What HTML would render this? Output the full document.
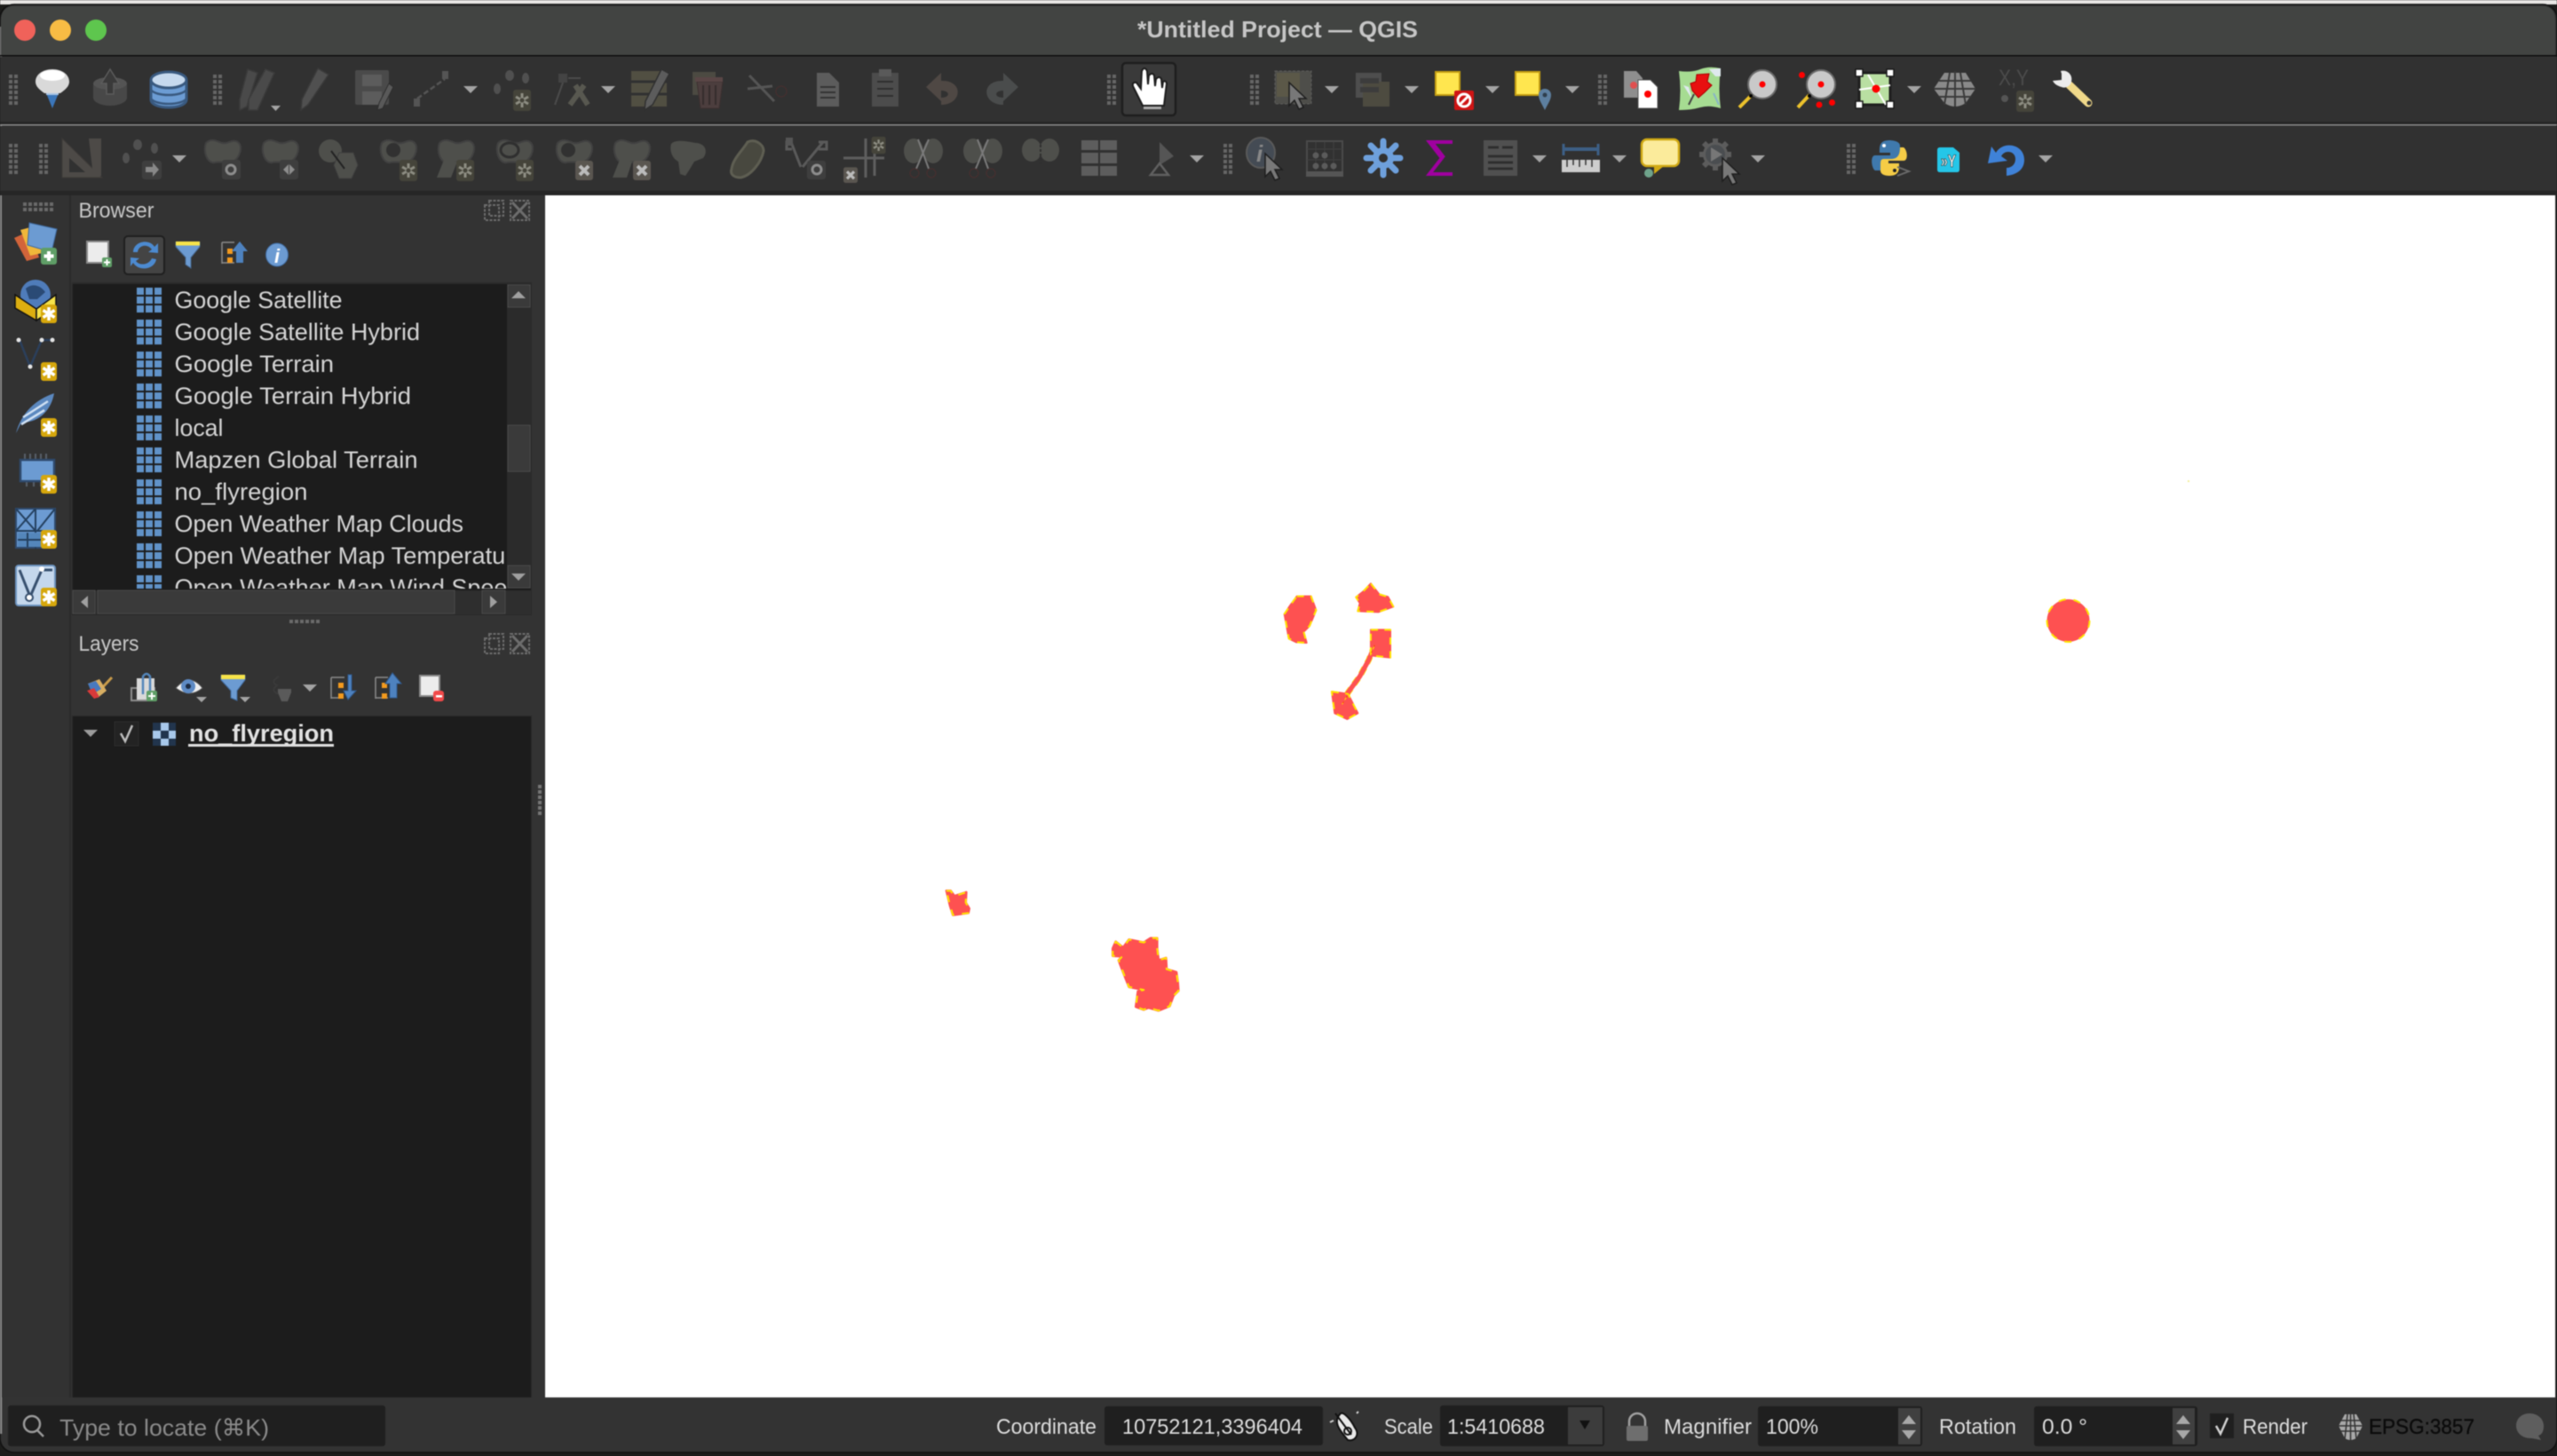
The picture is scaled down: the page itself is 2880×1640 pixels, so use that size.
<!DOCTYPE html>
<html><head><meta charset="utf-8"><title>QGIS</title>
<style>html,body{margin:0;padding:0;background:#1d1d1b;overflow:hidden}svg{display:block;filter:blur(.55px)}text{font-family:"Liberation Sans",sans-serif}</style>
</head><body>
<svg xmlns="http://www.w3.org/2000/svg" width="2880" height="1640" viewBox="0 0 2880 1640">
<defs>
<g id="h" fill="#666"><rect x="0" y="0" width="4" height="4"/><rect x="6" y="0" width="4" height="4"/><rect x="0" y="6" width="4" height="4"/><rect x="6" y="6" width="4" height="4"/><rect x="0" y="12" width="4" height="4"/><rect x="6" y="12" width="4" height="4"/><rect x="0" y="18" width="4" height="4"/><rect x="6" y="18" width="4" height="4"/><rect x="0" y="24" width="4" height="4"/><rect x="6" y="24" width="4" height="4"/><rect x="0" y="30" width="4" height="4"/><rect x="6" y="30" width="4" height="4"/></g>
<polygon id="a" points="0,0 16,0 8,8" fill="#a4a4a4"/>
<g id="g" fill="#6092c8"><rect x="0" y="0" width="8" height="8"/><rect x="10" y="0" width="8" height="8"/><rect x="20" y="0" width="8" height="8"/><rect x="0" y="10" width="8" height="8"/><rect x="10" y="10" width="8" height="8"/><rect x="20" y="10" width="8" height="8"/><rect x="0" y="20" width="8" height="8"/><rect x="10" y="20" width="8" height="8"/><rect x="20" y="20" width="8" height="8"/></g>
<path id="b" d="M4 4C10-2 16 2 22 4S34-1 40 3C46 8 42 20 36 24S20 24 14 26C6 28 0 14 4 4Z" fill="#4e4f4b" stroke="#414141" stroke-width="2"/>
<g id="sd"><rect width="20" height="24" rx="3" fill="#45443a"/><path d="M10 4V20M3 8L17 16M17 8L3 16" stroke="#8d8d82" stroke-width="3"/><circle cx="10" cy="12" r="2.500" fill="#45443a"/></g>
<g id="xd"><rect width="20" height="22" rx="3" fill="#5a5650"/><path d="M5 6L15 16M15 6L5 16" stroke="#bbb" stroke-width="4"/></g>
<g id="sy"><rect width="18" height="21" rx="3" fill="#d6a70c"/><path d="M9 3V18M2.500 6.500L15.500 14.500M15.500 6.500L2.500 14.500" stroke="#fff" stroke-width="3.500"/></g>
<path id="cur" d="M0 0V26L6 20L11 30L16 28L11 18L19 18Z" fill="#787878" stroke="#1e1e1e" stroke-width="1.500"/>
<g id="ft" fill="none" stroke="#6d6d6d" stroke-width="2" stroke-dasharray="3 1.500"><rect x="0" y="5" width="16" height="17"/><rect x="5" y="0" width="16" height="17"/></g>
<g id="cl" fill="none" stroke="#6d6d6d" stroke-width="2" stroke-dasharray="3 1.500"><rect x="0" y="0" width="21" height="22"/><path d="M2 2L19 20M19 2L2 20" stroke-width="3" stroke-dasharray="none"/></g>
<clipPath id="tc"><rect x="82" y="320" width="488" height="343"/></clipPath>
<g id="m1">
<path d="M182 125L230 125L247 172L225 225L205 245L215 282L180 280L155 268L140 185L160 155Z"/>
<path d="M432 82L460 118L490 127L508 160L458 178L388 175L395 148L382 128L405 110Z"/>
<path d="M432 238H498V332L432 325Z"/>
<path d="M300 447L355 455L388 520L352 540L310 520Z"/>
</g>
<g id="m2">
<path d="M78 70L92 70L105 88L145 75L143 110L155 130L152 145L100 152L90 120Z"/>
<path d="M650 242L675 262L695 235L745 245L768 230L790 230L790 265L795 305L820 297L822 335L855 345L860 380L862 408L845 425L832 460L795 475L760 465L745 472L718 462L725 410L745 405L695 395L675 345L660 305L672 292L640 290L640 265Z"/>
</g>
</defs>

<!-- frame -->
<rect width="2880" height="1640" fill="#1d1d1b"/>
<rect width="2880" height="5" fill="#e9e7e5"/>
<rect x="0" y="5" width="2880" height="1631" rx="16" fill="#333" stroke="#111" stroke-width="1.500"/>
<path d="M1 30V1615" stroke="#8a8a8a" stroke-width="2.500"/>
<path d="M16 7H2864Q2878 7 2878 24V62H1V24Q1 7 16 7Z" fill="#424442"/>
<rect y="62" width="2880" height="1.500" fill="#0d0d0d"/>
<circle cx="28" cy="34" r="12" fill="#f0625a"/><circle cx="68" cy="34" r="12" fill="#f8bc44"/><circle cx="108" cy="34" r="12" fill="#5ec64e"/>
<text x="1281" y="42" font-size="26" font-weight="700" fill="#c6c6c6" textLength="316" lengthAdjust="spacingAndGlyphs">*Untitled Project — QGIS</text>

<!-- toolbars -->
<rect y="64" width="2880" height="74" fill="#313131"/>
<rect y="137" width="2880" height="3" fill="#272727"/>
<rect y="140" width="2880" height="1.500" fill="#8c8c8c"/>
<rect y="142" width="2880" height="73" fill="#313131"/>
<rect y="215" width="2880" height="5" fill="#262626"/>

<!-- toolbar 1 -->
<use href="#h" x="10" y="84"/>
<polygon points="50,100 68,100 59,122" fill="#3b76ba"/><rect x="52" y="98" width="14" height="9" fill="#a9c4e4"/>
<path d="M59 78C70 78 78 84 78 92C78 98 72 102 68 105H50C46 102 40 98 40 92C40 84 48 78 59 78Z" fill="#d9d9d9"/><ellipse cx="59" cy="85" rx="14" ry="6" fill="#fff"/>
<ellipse cx="124" cy="110" rx="19" ry="9" fill="#484848"/><rect x="105" y="94" width="38" height="16" fill="#484848"/><ellipse cx="124" cy="94" rx="19" ry="7" fill="#545454"/>
<path d="M124 78L134 94H128V106H120V94H114Z" fill="#3a3a3a" stroke="#5c5c5c" stroke-width="1.500"/>
<path d="M170 90V112C170 124 210 124 210 112V90" fill="#6c9cd3" stroke="#39597f" stroke-width="3"/><ellipse cx="190" cy="90" rx="20" ry="9" fill="#c6d9ee" stroke="#39597f" stroke-width="3"/>
<path d="M170 101C175 109 205 109 210 101M170 111C175 119 205 119 210 111" fill="none" stroke="#39597f" stroke-width="2.500"/>
<use href="#h" x="240" y="84"/>
<g fill="#4a4a4a" stroke="#3b3b3b" stroke-width="1.500"><path d="M279 78L290 82L278 120L270 124V112Z"/><path d="M299 78L309 82L290 124L280 124V112Z"/></g>
<polygon points="305,119 316,119 310.500,125" fill="#a4a4a4"/>
<path d="M358 77L370 84L347 118L339 124L340 112Z" fill="#505050" stroke="#3a3a3a" stroke-width="1.500"/>
<rect x="400" y="79" width="38" height="39" rx="2" fill="#4a4a4a"/><rect x="408" y="84" width="22" height="13" fill="#5c5c5c"/><rect x="408" y="103" width="22" height="15" fill="#5c5c5c"/><path d="M438 94L443 98L431 122L425 124L427 116Z" fill="#595959" stroke="#2e2e2e"/>
<rect x="466" y="111" width="7" height="9" fill="#555"/><rect x="498" y="80" width="7" height="9" fill="#555"/><path d="M470 111L501 89" stroke="#555" stroke-width="2.500" stroke-dasharray="6 3"/>
<use href="#a" x="522" y="97"/>
<g fill="#505050"><ellipse cx="574" cy="85" rx="5" ry="6"/><ellipse cx="592" cy="88" rx="4" ry="6"/><ellipse cx="560" cy="100" rx="4" ry="6"/></g><use href="#sd" x="578" y="101"/>
<rect x="629" y="83" width="10" height="10" fill="#444"/><path d="M625 118L634 93M640 88H654" stroke="#4b4b4b" stroke-width="2"/><path d="M642 118L658 96M662 118L648 96" stroke="#585850" stroke-width="6"/>
<use href="#a" x="677" y="97"/>
<rect x="711" y="80" width="40" height="40" fill="#514f42"/><path d="M711 92H751M711 106H751" stroke="#313131" stroke-width="3"/><path d="M745 78L754 83L735 118L726 124L727 114Z" fill="#5c5c5c" stroke="#303030" stroke-width="1.500"/>
<rect x="780" y="81" width="26" height="26" fill="#4c4a42"/><path d="M785 92H814L810 122H789Z" fill="#4c3e3e" stroke="#3d3030"/><rect x="783" y="87" width="31" height="5" fill="#5a4646"/><path d="M792 96V118M799 96V118M806 96V118" stroke="#352c2c" stroke-width="2"/>
<path d="M844 85L872 114M842 100L870 97" stroke="#555" stroke-width="3" fill="none"/><circle cx="880" cy="103" r="6" fill="none" stroke="#4a2f2f"/>
<path d="M920 82H934L945 93V120H920V82Z" fill="#5c5c5c"/><path d="M924 98H941M924 104H941M924 110H941" stroke="#333" stroke-width="2"/>
<rect x="982" y="82" width="30" height="38" fill="#4c4c4c"/><rect x="990" y="78" width="14" height="8" fill="#5a5a5a"/><path d="M988 92H1006M988 100H1006M988 108H1006" stroke="#2f2f2f" stroke-width="2"/>
<path d="M1060 82L1043 98L1060 114V102C1070 102 1071 110 1060 110V118C1084 118 1086 90 1060 91Z" fill="#4f4844"/>
<path d="M1130 82L1147 98L1130 114V102C1120 102 1119 110 1130 110V118C1106 118 1104 90 1130 91Z" fill="#4a4c4c"/>
<use href="#h" x="1247" y="84"/>
<rect x="1264" y="71" width="60" height="59" rx="4" fill="#3a3a3a" stroke="#1e1e1e" stroke-width="2.500"/>
<path d="M1287 119L1276 97Q1275 92 1280 93L1285 100L1286 80Q1289 74 1292 80L1293 95L1294 85Q1298 81 1300 85L1301 97L1302 89Q1306 85 1308 89L1309 99L1310 92Q1313 90 1314 94L1311 119Z" fill="#fff" stroke="#1d1d1d" stroke-width="2"/>
<rect x="1288" y="120" width="20" height="3" fill="#aaa"/>
<use href="#h" x="1408" y="84"/>
<rect x="1436" y="80" width="41" height="37" fill="#4e4e4a" stroke="#5c5c5c" stroke-dasharray="3 2"/><rect x="1438" y="82" width="26" height="27" fill="#5b5848"/>
<use href="#cur" x="1452" y="93"/>
<use href="#a" x="1492" y="97"/>
<rect x="1527" y="82" width="29" height="28" fill="#4e4e4e"/><rect x="1535" y="92" width="30" height="28" fill="#4d4b40"/><rect x="1532" y="88" width="21" height="6" fill="#3c3c3c"/><rect x="1532" y="98" width="21" height="6" fill="#3c3c3c"/>
<use href="#a" x="1582" y="97"/>
<rect x="1617" y="81" width="27" height="26" fill="#ffe64f" stroke="#c59e12" stroke-width="2"/><rect x="1638" y="102" width="22" height="22" rx="2" fill="#cf1414"/><circle cx="1649" cy="113" r="7" fill="none" stroke="#fff" stroke-width="3"/><path d="M1644 118L1654 108" stroke="#fff" stroke-width="3"/>
<use href="#a" x="1673" y="97"/>
<rect x="1707" y="81" width="27" height="26" fill="#ffe64f" stroke="#c59e12" stroke-width="2"/><path d="M1740 124C1736 116 1733 112 1733 107A7 7 0 1 1 1747 107C1747 112 1744 116 1740 124Z" fill="#5d7f9f"/><circle cx="1740" cy="107" r="2.500" fill="#2e3e4c"/>
<use href="#a" x="1763" y="97"/>
<use href="#h" x="1800" y="84"/>
<path d="M1829 80H1843L1850 88V110H1829Z" fill="#8e8e8e"/><circle cx="1840" cy="96" r="4" fill="#e05050"/>
<path d="M1845 90H1859L1867 98V122H1845Z" fill="#fff" stroke="#555"/><circle cx="1856" cy="106" r="4" fill="#f00"/>
<path d="M1891 80Q1905 82 1915 78T1938 77Q1935 100 1938 122Q1925 118 1915 121T1891 124Q1894 102 1891 80Z" fill="#a6dc92"/><path d="M1925 78L1932 86L1938 86V77ZM1896 96L1906 112L1902 98Z" fill="#dfe9ee"/><path d="M1930 105L1936 118" stroke="#88b4c8" stroke-width="2"/>
<path d="M1911 84L1925 83L1923 92L1928 96L1920 104L1913 110L1906 102L1904 94L1910 92Z" fill="#e81010" stroke="#a00" /><path d="M1908 106L1902 118" stroke="#444" stroke-width="2"/>
<circle cx="1985" cy="95" r="16" fill="#c9c9c9" stroke="#6b6b6b" stroke-width="2"/><circle cx="1985" cy="95" r="3.500" fill="#f00"/><path d="M1973 107L1959 121" stroke="#ecc22c" stroke-width="4"/><circle cx="1972" cy="108" r="2" fill="#000"/>
<circle cx="2051" cy="95" r="16" fill="#c9c9c9" stroke="#6b6b6b" stroke-width="2"/><circle cx="2051" cy="95" r="3.500" fill="#f00"/><path d="M2038 107L2025 121" stroke="#ecc22c" stroke-width="4"/><circle cx="2038" cy="108" r="2" fill="#000"/>
<circle cx="2029.500" cy="84.500" r="3.500" fill="#f00"/><circle cx="2049" cy="118" r="3.500" fill="#f00"/><circle cx="2063.500" cy="115.500" r="3.500" fill="#f00"/>
<rect x="2094" y="82" width="35" height="36" fill="#b9dfa2" stroke="#1f1f1f" stroke-width="3"/><path d="M2104 84L2124 118M2094 101L2129 96" stroke="#fff" stroke-width="2"/>
<circle cx="2113" cy="100" r="4.500" fill="#f00"/>
<g fill="#fff" stroke="#1a1a1a" stroke-width="1.500"><rect x="2090" y="78" width="8" height="8"/><rect x="2125" y="78" width="8" height="8"/><rect x="2090" y="114" width="8" height="8"/><rect x="2125" y="114" width="8" height="8"/></g>
<use href="#a" x="2148" y="97"/>
<path d="M2178 100L2190 82H2214L2225 100L2214 116Q2202 124 2190 116Z" fill="#8a8a8a"/><path d="M2178 100H2225M2184 91H2220M2184 109H2220M2196 82L2190 118M2208 82L2214 118M2202 80V120" stroke="#3a3a3a" stroke-width="2"/>
<text x="2251" y="96" font-size="25" fill="#4b4b4b" textLength="34" lengthAdjust="spacingAndGlyphs">X,Y</text><circle cx="2258" cy="111" r="4" fill="#555"/><use href="#sd" x="2271" y="102"/>
<path d="M2331 96L2352 116" stroke="#f0d98a" stroke-width="9" stroke-linecap="round"/><path d="M2321 80C2328 78 2335 84 2333 92C2332 97 2326 100 2322 98C2318 97 2314 95 2312 91L2322 90L2322 83Z" fill="#ececec"/><circle cx="2353" cy="116" r="2.500" fill="#333"/>

<!-- toolbar 2 -->
<use href="#h" x="10" y="162"/><use href="#h" x="44" y="162"/>
<path d="M70 156L115 200H70Z" fill="#4d4a47" stroke="#3d3a38"/><path d="M78 178L96 194H78Z" fill="#313131"/><path d="M100 156H114V198H105Z" fill="#4d4a47"/>
<g fill="#505050"><ellipse cx="155" cy="163" rx="5" ry="6"/><ellipse cx="174" cy="167" rx="4" ry="6"/><ellipse cx="142" cy="178" rx="4" ry="6"/></g><rect x="160" y="181" width="22" height="21" rx="3" fill="#3e3e3e"/><path d="M164 188H172V183L179 191L172 199V194H164Z" fill="#888"/>
<use href="#a" x="194" y="175"/>
<use href="#b" x="228" y="157"/><rect x="250" y="180" width="21" height="22" rx="3" fill="#3e3e3e"/><circle cx="260" cy="191" r="5" fill="none" stroke="#8d8d8d" stroke-width="3"/>
<use href="#b" x="293" y="157"/><rect x="315" y="180" width="21" height="22" rx="3" fill="#3e3e3e"/><path d="M319 191L325 185V197ZM332 191L326 185V197Z" fill="#8d8d8d"/>
<ellipse cx="372" cy="170" rx="13" ry="13" fill="#4e4f4b"/><path d="M382 172H398L403 186L396 201H382L376 186Z" fill="#4e4f4b" stroke="#3e3e3e"/><path d="M373 170L388 190" stroke="#222" stroke-width="2"/>
<use href="#b" x="426" y="157"/><ellipse cx="443" cy="169" rx="8" ry="8" fill="#313131"/><use href="#sd" x="450" y="180"/>
<use href="#b" x="491" y="157"/><path d="M492 200L500 180L515 182L508 200Z" fill="#4e4f4b"/><use href="#sd" x="514" y="180"/>
<use href="#b" x="557" y="157"/><ellipse cx="574" cy="169" rx="10" ry="8" fill="none" stroke="#2f2f2f" stroke-width="3"/><use href="#sd" x="581" y="180"/>
<use href="#b" x="624" y="157"/><ellipse cx="640" cy="169" rx="8" ry="8" fill="#313131"/><use href="#xd" x="648" y="181"/>
<use href="#b" x="689" y="157"/><path d="M690 200L698 180L712 182L706 200Z" fill="#4e4f4b"/><use href="#xd" x="713" y="181"/>
<path d="M756 162C762 156 776 160 784 161C796 162 797 172 792 178L782 182L776 192L772 198L766 196L764 182C756 178 754 168 756 162Z" fill="#4e4f4b"/>
<path d="M824 190C826 178 836 170 842 160C850 156 860 162 860 170C858 182 846 198 834 200C826 200 822 196 824 190Z" fill="#48483f" stroke="#5e5e52" stroke-width="3"/>
<path d="M891 160L902 188M891 160H886V168H892M927 160L904 188M922 160H931V168H922" stroke="#5a5a5a" stroke-width="3" fill="none"/><rect x="885" y="155" width="8" height="9" fill="#555"/><rect x="909" y="181" width="21" height="21" rx="3" fill="#3e3e3e"/><circle cx="920" cy="191" r="5" fill="none" stroke="#8d8d8d" stroke-width="3"/>
<path d="M950 178H996M975 156V200M985 168V198" stroke="#5e5e5e" stroke-width="3"/><use href="#sd" x="982" y="155" transform="translate(196 30) scale(.8)"/><use href="#xd" x="950" y="188" transform="translate(190 38) scale(.8)"/>
<g id="cut1"><ellipse cx="1029" cy="170" rx="11" ry="14" fill="#4e4f4b"/><ellipse cx="1051" cy="170" rx="11" ry="14" fill="#4e4f4b"/><path d="M1046 157L1032 190M1034 157L1046 190" stroke="#7a7a7a" stroke-width="2"/><circle cx="1030" cy="195" r="5" fill="none" stroke="#4a2f2f"/><circle cx="1049" cy="195" r="5" fill="none" stroke="#4a2f2f"/></g>
<use href="#cut1" x="67"/>
<ellipse cx="1162" cy="169" rx="11" ry="13" fill="#4e4f4b"/><ellipse cx="1182" cy="169" rx="11" ry="13" fill="#4e4f4b"/><path d="M1172 158V185" stroke="#2f2f2f" stroke-width="2" stroke-dasharray="3 2"/>
<g fill="#5d5d5d"><rect x="1218" y="158" width="40" height="11"/><rect x="1218" y="172" width="40" height="12"/><rect x="1218" y="187" width="40" height="11"/></g><path d="M1238 158V198" stroke="#313131" stroke-width="2"/>
<path d="M1306 160L1322 176L1306 186Z" fill="#555"/><path d="M1306 184L1296 197H1316Z" fill="none" stroke="#606060" stroke-width="2.500"/>
<use href="#a" x="1340" y="175"/>
<use href="#h" x="1378" y="162"/>
<ellipse cx="1420" cy="172" rx="16" ry="17" fill="#444b54" stroke="#5a5a5a" stroke-width="2"/><text x="1415" y="182" font-size="26" font-weight="700" font-style="italic" fill="#888">i</text>
<use href="#cur" x="1425" y="173"/>
<rect x="1472" y="159" width="40" height="39" fill="none" stroke="#4a4a4a" stroke-width="2"/><rect x="1471" y="193" width="42" height="6" fill="#555"/><path d="M1482 160V192M1492 160V192M1502 160V192M1472 168H1512M1472 180H1512" stroke="#3f3f3f"/><g fill="#5b5b5b"><circle cx="1482" cy="175" r="3.500"/><circle cx="1492" cy="175" r="3.500"/><circle cx="1482" cy="187" r="3.500"/><circle cx="1492" cy="187" r="3.500"/><circle cx="1502" cy="187" r="3.500"/></g>
<g stroke="#6ea0dc" stroke-width="7" stroke-linecap="round"><path d="M1558 159V197M1539 178H1577M1544 164L1572 192M1572 164L1544 192"/></g><circle cx="1558" cy="178" r="12" fill="#6ea0dc"/><circle cx="1558" cy="178" r="5" fill="#313131"/>
<path d="M1636 160H1610L1624 178L1610 196H1636" fill="none" stroke="#a000a0" stroke-width="4"/><path d="M1612 160L1626 178" stroke="#a000a0" stroke-width="5"/>
<rect x="1671" y="158" width="38" height="40" fill="#505050"/><path d="M1676 166H1688M1692 166H1704M1676 176H1704M1676 183H1704M1676 190H1704" stroke="#2f2f2f" stroke-width="3"/>
<use href="#a" x="1726" y="175"/>
<rect x="1760" y="166" width="41" height="4" fill="#3d5f85"/><path d="M1761 162V175M1800 162V175" stroke="#3d5f85" stroke-width="3"/><rect x="1759" y="180" width="43" height="14" fill="#cdcdcd"/><path d="M1765 180V188M1772 180V186M1779 180V188M1786 180V186M1793 180V188" stroke="#333" stroke-width="1.500"/>
<use href="#a" x="1816" y="175"/>
<rect x="1849" y="157" width="42" height="30" rx="6" fill="#fbeb9b" stroke="#d0a914" stroke-width="2.500"/><path d="M1863 187V196L1874 187Z" fill="#d0a914"/><circle cx="1857" cy="195" r="5" fill="#6fa38b"/>
<g stroke="#5c5c5c" stroke-width="6"><path d="M1932 156V192M1914 174H1950M1919 161L1945 187M1945 161L1919 187"/></g><circle cx="1932" cy="174" r="12.500" fill="#4a4d50" stroke="#5c5c5c" stroke-width="3"/><path d="M1927 166L1940 174L1927 182Z" fill="#777"/>
<use href="#cur" x="1940" y="178"/>
<use href="#a" x="1972" y="175"/>
<use href="#h" x="2080" y="162"/>
<path d="M2128 158C2116 158 2117 166 2117 172H2129V175H2112C2106 175 2108 190 2112 192H2118C2118 182 2122 179 2128 179H2136C2140 179 2140 176 2140 172V164C2140 160 2134 158 2128 158Z" fill="#3f79ad"/><circle cx="2122" cy="164" r="2" fill="#fff"/>
<path d="M2128 198C2140 198 2139 190 2139 184H2127V181H2144C2150 181 2148 168 2144 166H2140C2140 176 2136 179 2130 179H2122C2118 179 2118 182 2118 186V192C2118 196 2122 198 2128 198Z" fill="#f5cc46"/><circle cx="2134" cy="192" r="2" fill="#222"/>
<path d="M2137 188L2150 193L2137 198" fill="none" stroke="#6a6a6a" stroke-width="2"/>
<path d="M2182 169Q2182 166 2185 166H2200L2207 172V191Q2207 194 2204 194H2185Q2182 194 2182 191Z" fill="#25c6e8"/><text x="2186" y="188" font-size="19" font-weight="700" fill="#fff" stroke="#111" stroke-width=".6" textLength="17" lengthAdjust="spacingAndGlyphs">»Y</text>
<path d="M2248 172C2256 158 2280 162 2280 180C2280 192 2270 197 2260 198V189C2266 189 2270 185 2270 179C2270 170 2258 168 2254 176L2261 181L2239 184L2243 165Z" fill="#3f82d8"/>
<use href="#a" x="2296" y="175"/>

<!-- left bar -->
<rect x="2" y="220" width="76" height="1354" fill="#323232"/>
<rect x="78" y="220" width="2" height="1354" fill="#2a2a2a"/>
<g fill="#6a6a6a"><rect x="26" y="228" width="4" height="4"/><rect x="32" y="228" width="4" height="4"/><rect x="38" y="228" width="4" height="4"/><rect x="44" y="228" width="4" height="4"/><rect x="50" y="228" width="4" height="4"/><rect x="56" y="228" width="4" height="4"/><rect x="26" y="234" width="4" height="4"/><rect x="32" y="234" width="4" height="4"/><rect x="38" y="234" width="4" height="4"/><rect x="44" y="234" width="4" height="4"/><rect x="50" y="234" width="4" height="4"/><rect x="56" y="234" width="4" height="4"/></g>
<path d="M16 268L34 260L44 290L30 294Z" fill="#d2643a"/><path d="M23 259L42 254L52 284L34 288Z" fill="#f0b73a"/><path d="M33 251L64 258L58 284L31 276Z" fill="#6c9bd2" stroke="#3f6a9f"/><rect x="46" y="279" width="18" height="19" rx="3" fill="#5f9e67"/><path d="M55 283V294M49.500 288.500H60.500" stroke="#fff" stroke-width="4"/>
<circle cx="40" cy="332" r="17" fill="#4f7cba"/><path d="M29 325C37 318 46 322 51 329L42 337L33 337Z" fill="#2a4a75"/>
<path d="M17 332L41 348V361L17 347Z" fill="#dcae10" stroke="#111" stroke-width="1.500"/><path d="M41 348L63 332V346L41 361Z" fill="#f6e34a" stroke="#111" stroke-width="1.500"/><use href="#sy" x="46" y="343"/>
<path d="M22 383L34 413L47 383M47 383H60" stroke="#2b3f5c" stroke-width="2.500" fill="none"/><g fill="#e4e4e4"><circle cx="21" cy="383" r="2.500"/><circle cx="34" cy="413" r="2.500"/><circle cx="47" cy="383" r="2.500"/><circle cx="59" cy="383" r="2.500"/></g><use href="#sy" x="46" y="408"/>
<path d="M18 488C24 465 40 450 61 443C58 460 46 476 24 476Z" fill="#5b88bf"/><path d="M26 470L54 452M24 478L50 462" stroke="#cfe0f3" stroke-width="2.500"/><use href="#sy" x="46" y="471"/>
<path d="M28 511V520M34 511V520M40 511V520M46 511V520M52 511V520M30 548V540M38 548V540M46 548V540" stroke="#58606a" stroke-width="2"/><rect x="23" y="518" width="38" height="24" fill="#6c9bd2" stroke="#2f4a6d" stroke-width="2.500"/><use href="#sy" x="46" y="535"/>
<rect x="18" y="573" width="44" height="44" fill="#6c9bd2" stroke="#2f4a6d" stroke-width="2"/><path d="M18 598H62M40 573V618M18 573L40 598M40 573L18 598M62 573L42 598" stroke="#24405f" stroke-width="2" fill="none"/><rect x="20" y="600" width="40" height="16" fill="#5486bb"/><path d="M20 608H60M31 600V616" stroke="#24405f" stroke-width="2"/><use href="#sy" x="46" y="597"/>
<rect x="18" y="637" width="44" height="45" rx="3" fill="#c4d7ec" stroke="#6c93bf" stroke-width="2"/><path d="M22 642L34 672L47 642L59 642" stroke="#37506f" stroke-width="3" fill="none"/><circle cx="33" cy="673" r="4" fill="#fff" stroke="#37506f" stroke-width="2"/><circle cx="47" cy="641" r="3" fill="#fff"/><use href="#sy" x="46" y="662"/>

<!-- Browser panel -->
<rect x="80" y="220" width="534" height="1354" fill="#333"/>
<text x="88.500" y="245" font-size="24" fill="#c8c8c8" textLength="85" lengthAdjust="spacingAndGlyphs">Browser</text>
<use href="#ft" x="546" y="226"/><use href="#cl" x="575" y="226"/>
<rect x="98" y="272" width="24" height="24" fill="#ececec" stroke="#8a8a8a" stroke-width="2"/><rect x="115" y="290" width="11" height="11" rx="2" fill="#5f9e67"/><path d="M120.500 292V299M117 295.500H124" stroke="#fff" stroke-width="2"/>
<rect x="140" y="266" width="45" height="43" rx="4" fill="#444" stroke="#1f1f1f" stroke-width="2"/>
<path d="M150 284C150 272 168 268 174 278L178 274V285L167 284L171 281C166 274 156 276 155 284Z" fill="#4c8ad0"/><path d="M176 292C174 304 156 306 150 296L147 300V290L157 291L153 294C158 300 168 298 171 291Z" fill="#4c8ad0"/>
<path d="M198 273H225V278L215 290V302L209 298V290L198 278Z" fill="#6c9bd2" stroke="#47688f"/><rect x="198" y="272" width="27" height="4.500" fill="#f6e34a"/>
<path d="M250 273H264M250 296H264M250 273V297" stroke="#8c8c8c" stroke-width="1.500" fill="none"/><rect x="256" y="280" width="6" height="6" fill="#f39a1e"/><rect x="256" y="290" width="6" height="6" fill="#f39a1e"/><path d="M270 272L279 283H274V296H266V283H261Z" fill="#4e82bf"/>
<ellipse cx="312" cy="287" rx="12.500" ry="13" fill="#6c9bd2" stroke="#3f6a9f"/><text x="309" y="296" font-size="22" font-weight="700" font-style="italic" fill="#fff">i</text>

<rect x="81" y="318" width="518" height="375" fill="#2a2a2a"/>
<rect x="82" y="320" width="516" height="372" fill="#1c1c1c"/>
<g clip-path="url(#tc)" fill="#d4d4d4" font-size="27">
<use href="#g" x="154" y="324"/><use href="#g" x="154" y="360"/><use href="#g" x="154" y="396"/><use href="#g" x="154" y="432"/><use href="#g" x="154" y="468"/><use href="#g" x="154" y="504"/><use href="#g" x="154" y="540"/><use href="#g" x="154" y="576"/><use href="#g" x="154" y="612"/><use href="#g" x="154" y="648"/>
<text x="196.500" y="347" textLength="189" lengthAdjust="spacingAndGlyphs">Google Satellite</text>
<text x="196.500" y="383" textLength="276.500" lengthAdjust="spacingAndGlyphs">Google Satellite Hybrid</text>
<text x="196.500" y="419" textLength="179.500" lengthAdjust="spacingAndGlyphs">Google Terrain</text>
<text x="196.500" y="455" textLength="266.500" lengthAdjust="spacingAndGlyphs">Google Terrain Hybrid</text>
<text x="196.500" y="491" textLength="55" lengthAdjust="spacingAndGlyphs">local</text>
<text x="196.500" y="527" textLength="274" lengthAdjust="spacingAndGlyphs">Mapzen Global Terrain</text>
<text x="196.500" y="563" textLength="150" lengthAdjust="spacingAndGlyphs">no_flyregion</text>
<text x="196.500" y="599" textLength="325.500" lengthAdjust="spacingAndGlyphs">Open Weather Map Clouds</text>
<text x="196.500" y="635" textLength="397" lengthAdjust="spacingAndGlyphs">Open Weather Map Temperature</text>
<text x="196.500" y="671" textLength="390" lengthAdjust="spacingAndGlyphs">Open Weather Map Wind Speed</text>
</g>
<rect x="571" y="320" width="27" height="343" fill="#2b2b2b"/>
<rect x="572" y="321" width="25" height="25" fill="#3a3a3a" stroke="#4a4a4a"/><polygon points="576,336 592,336 584,328" fill="#a0a0a0"/>
<rect x="572" y="479" width="25" height="52" fill="#3a3a3a" stroke="#4a4a4a"/>
<rect x="572" y="637" width="25" height="25" fill="#3a3a3a" stroke="#4a4a4a"/><polygon points="576,646 592,646 584,654" fill="#a0a0a0"/>
<rect x="82" y="665" width="516" height="27" fill="#2e2e2e"/>
<rect x="82" y="665" width="25" height="26" fill="#3a3a3a" stroke="#4a4a4a"/><polygon points="99,671 99,685 91,678" fill="#a0a0a0"/>
<rect x="110" y="665" width="402" height="26" fill="#3a3a3a" stroke="#4a4a4a"/>
<rect x="543" y="665" width="26" height="26" fill="#3a3a3a" stroke="#4a4a4a"/><polygon points="552,671 552,685 560,678" fill="#a0a0a0"/>
<g fill="#6a6a6a"><rect x="326" y="698" width="4" height="4"/><rect x="332" y="698" width="4" height="4"/><rect x="338" y="698" width="4" height="4"/><rect x="344" y="698" width="4" height="4"/><rect x="350" y="698" width="4" height="4"/><rect x="356" y="698" width="4" height="4"/></g>

<!-- Layers panel -->
<text x="88.500" y="733" font-size="24" fill="#c8c8c8" textLength="68" lengthAdjust="spacingAndGlyphs">Layers</text>
<use href="#ft" x="546" y="714"/><use href="#cl" x="575" y="714"/>
<path d="M126 763L112 778" stroke="#c79a4a" stroke-width="3"/><path d="M99 770L112 765L120 778L110 786Z" fill="#d8ae62"/><path d="M99 770L108 767L114 776L104 782Z" fill="#4879bf"/><path d="M98 778L106 775L112 785L106 787Z" fill="#d83a3a"/>
<rect x="148" y="775" width="26" height="14" fill="none" stroke="#8c8c8c" stroke-width="2"/><rect x="154" y="764" width="20" height="24" fill="#d9d9d9"/><path d="M161 782V762Q165 756 169 762V782" fill="none" stroke="#5486bb" stroke-width="2.500"/><rect x="165" y="778" width="12" height="12" rx="2" fill="#5f9e67"/><path d="M171 780V788M167 784H175" stroke="#fff" stroke-width="2"/>
<path d="M198 775Q214 757 228 775Q214 787 198 775Z" fill="#eee" stroke="#555"/><circle cx="212" cy="773" r="8" fill="#5d8ac4"/><circle cx="212" cy="773" r="3" fill="#1c2c44"/><polygon points="221,785 233,785 227,791" fill="#a4a4a4"/>
<path d="M249 761H276V766L267 778V789L260 786V778L249 766Z" fill="#6c9bd2" stroke="#3f6a9f"/><rect x="249" y="760" width="27" height="5" fill="#f6e34a"/><polygon points="270,785 282,785 276,791" fill="#a4a4a4"/>
<path d="M314 762Q304 768 312 772Q304 778 314 782" fill="none" stroke="#3a3a3a" stroke-width="2"/><path d="M313 776H328V780L324 790H317L313 780Z" fill="#5a5a5a"/><use href="#a" x="341" y="771"/>
<path d="M373 763H388M373 786H386M373 763V787" stroke="#8c8c8c" stroke-width="1.500" fill="none"/><rect x="381" y="769" width="6" height="6" fill="#f39a1e"/><rect x="381" y="781" width="6" height="6" fill="#f39a1e"/><path d="M392 760V778H387L392 788L401 778H396V760Z" fill="#4e82bf" stroke="#2f5a8f"/>
<path d="M423 763H437M423 786H437M423 763V787" stroke="#8c8c8c" stroke-width="1.500" fill="none"/><rect x="430" y="769" width="6" height="6" fill="#f39a1e"/><rect x="430" y="781" width="6" height="6" fill="#f39a1e"/><path d="M442 758L452 770H447V786H439V770H434Z" fill="#4e82bf" stroke="#2f5a8f"/>
<rect x="473" y="761" width="22" height="23" fill="#ececec" stroke="#8a8a8a" stroke-width="2"/><rect x="488" y="778" width="12" height="12" rx="3" fill="#f24a4a"/><rect x="491" y="783" width="7" height="2.500" fill="#fff"/>

<rect x="81" y="806" width="518" height="768" fill="#2a2a2a"/>
<rect x="82" y="807" width="516" height="767" fill="#1c1c1c"/>
<polygon points="94,822 110,822 102,830" fill="#9c9c9c"/>
<rect x="129" y="813" width="27" height="27" fill="#232323" stroke="#2c2c2c"/>
<path d="M136 826L141 835L149 817" fill="none" stroke="#bcbcbc" stroke-width="2.500"/>
<rect x="172" y="814" width="26" height="26" fill="#22354d"/><rect x="181" y="814" width="9" height="9" fill="#a8c8ea"/><rect x="172" y="823" width="9" height="9" fill="#a8c8ea"/><rect x="190" y="823" width="8" height="9" fill="#a8c8ea"/><rect x="181" y="832" width="9" height="8" fill="#a8c8ea"/>
<text x="213" y="835" font-size="27" font-weight="700" fill="#e2e2e2" textLength="163" lengthAdjust="spacingAndGlyphs">no_flyregion</text>
<rect x="212" y="838" width="164" height="3" fill="#e2e2e2"/>
<g fill="#777"><rect x="606" y="884" width="4" height="4"/><rect x="606" y="890" width="4" height="4"/><rect x="606" y="896" width="4" height="4"/><rect x="606" y="902" width="4" height="4"/><rect x="606" y="908" width="4" height="4"/><rect x="606" y="914" width="4" height="4"/></g>

<!-- canvas -->
<rect x="614" y="220" width="2264" height="1354" fill="#fff"/>
<g transform="translate(1400 630) scale(.3333)">
<path d="M445 290L425 340L395 395L355 450L335 490" fill="none" stroke="#ffe600" stroke-width="20" stroke-dasharray="24 18"/>
<path d="M445 290L425 340L395 395L355 450L335 490" fill="none" stroke="#fe5151" stroke-width="16"/>
<use href="#m1" fill="#fe5151" stroke="#fe5151" stroke-width="6" stroke-linejoin="round"/>
<use href="#m1" fill="none" stroke="#ffe600" stroke-width="6" stroke-dasharray="24 22" stroke-linejoin="round"/>
<path d="M445 290L430 325M352 462L335 490" fill="none" stroke="#ffe600" stroke-width="3" stroke-dasharray="16 6"/>
<path d="M445 290L430 325M352 462L335 490" fill="none" stroke="#e00" stroke-width="2" stroke-dasharray="6 16"/>
</g>
<g transform="translate(1040 980) scale(.3333)">
<use href="#m2" fill="#fe5151" stroke="#fe5151" stroke-width="8" stroke-linejoin="round"/>
<use href="#m2" fill="none" stroke="#ffe600" stroke-width="6" stroke-dasharray="24 26" stroke-linejoin="round"/>
</g>
<circle cx="2329.500" cy="699" r="24" fill="#fe5151"/>
<circle cx="2329.500" cy="699" r="24" fill="none" stroke="#ffe600" stroke-width="2" stroke-dasharray="8 9"/>
<rect x="2464" y="541" width="2" height="2" fill="#f2ef9a"/>

<!-- status bar -->
<rect x="9" y="1583" width="425" height="46" rx="3" fill="#1f1f1f"/>
<circle cx="36" cy="1604" r="9" fill="none" stroke="#9a9a9a" stroke-width="2.500"/><path d="M42 1611L49 1618" stroke="#9a9a9a" stroke-width="2.500"/>
<text x="67" y="1617" font-size="26" fill="#8a8a8a" textLength="236" lengthAdjust="spacingAndGlyphs" style='font-family:"Liberation Sans","DejaVu Sans",sans-serif'>Type to locate (⌘K)</text>
<g font-size="24" fill="#dcdcdc">
<text x="1122" y="1615" textLength="113" lengthAdjust="spacingAndGlyphs">Coordinate</text>
<rect x="1244" y="1584" width="246" height="44" rx="3" fill="#1f1f1f"/>
<text x="1264" y="1615" textLength="203" lengthAdjust="spacingAndGlyphs">10752121,3396404</text>
<text x="1559" y="1615" textLength="55" lengthAdjust="spacingAndGlyphs">Scale</text>
<rect x="1622" y="1583" width="185" height="46" rx="3" fill="#1f1f1f"/>
<text x="1630" y="1615" textLength="110" lengthAdjust="spacingAndGlyphs">1:5410688</text>
<rect x="1766" y="1585" width="39" height="42" fill="#3c3c3c"/><polygon points="1779,1600 1791,1600 1785,1610" fill="#111"/>
<text x="1874" y="1615" textLength="99" lengthAdjust="spacingAndGlyphs">Magnifier</text>
<rect x="1980" y="1584" width="185" height="45" rx="3" fill="#1f1f1f"/>
<text x="1989" y="1615" textLength="59" lengthAdjust="spacingAndGlyphs">100%</text>
<rect x="2138" y="1586" width="25" height="41" fill="#404040"/><polygon points="2142,1604 2158,1604 2150,1594" fill="#a8a8a8"/><polygon points="2142,1611 2158,1611 2150,1621" fill="#a8a8a8"/>
<text x="2184" y="1615" textLength="87" lengthAdjust="spacingAndGlyphs">Rotation</text>
<rect x="2291" y="1584" width="184" height="45" rx="3" fill="#1f1f1f"/>
<text x="2300" y="1615" textLength="51" lengthAdjust="spacingAndGlyphs">0.0 °</text>
<rect x="2447" y="1586" width="25" height="41" fill="#404040"/><polygon points="2451,1604 2467,1604 2459,1594" fill="#a8a8a8"/><polygon points="2451,1611 2467,1611 2459,1621" fill="#a8a8a8"/>
<rect x="2489" y="1592" width="27" height="28" fill="#1f1f1f"/><path d="M2496 1606L2501 1615L2509 1597" fill="none" stroke="#d0d0d0" stroke-width="2.500"/>
<text x="2526" y="1615" textLength="73" lengthAdjust="spacingAndGlyphs">Render</text>
<text x="2668" y="1615" fill="#0c0c0c" textLength="119" lengthAdjust="spacingAndGlyphs" stroke="#0c0c0c" stroke-width=".4">EPSG:3857</text>
</g>
<path d="M1504 1592L1522 1616M1510 1592C1500 1602 1510 1612 1518 1622C1526 1624 1532 1616 1526 1608C1522 1600 1514 1590 1510 1592Z" fill="#e8e8e8" stroke="#111" stroke-width="2"/><circle cx="1518" cy="1612" r="4" fill="none" stroke="#111" stroke-width="2"/><path d="M1502 1600L1498 1602M1528 1592L1530 1590" stroke="#ccc" stroke-width="2"/>
<path d="M1835 1606V1601A9 9 0 0 1 1853 1601V1606" fill="none" stroke="#a0a0a0" stroke-width="2.500"/><rect x="1832" y="1606" width="24" height="17" rx="2" fill="#6e6e6e"/>
<path d="M2634 1606L2641 1593H2654L2661 1606L2654 1620Q2647 1624 2641 1620Z" fill="#a8a8a8"/><path d="M2634 1606H2661M2636 1600H2659M2636 1612H2659M2644 1593L2641 1621M2651 1593L2654 1621M2647.500 1592V1622" stroke="#333" stroke-width="1.500"/>
<path d="M2849 1592C2858 1592 2865 1598 2865 1606C2865 1612 2863 1616 2859 1617L2862 1622C2856 1621 2853 1620 2850 1620C2841 1620 2834 1614 2834 1606C2834 1598 2840 1592 2849 1592Z" fill="#5e5e5e"/>
</svg>
</body></html>
